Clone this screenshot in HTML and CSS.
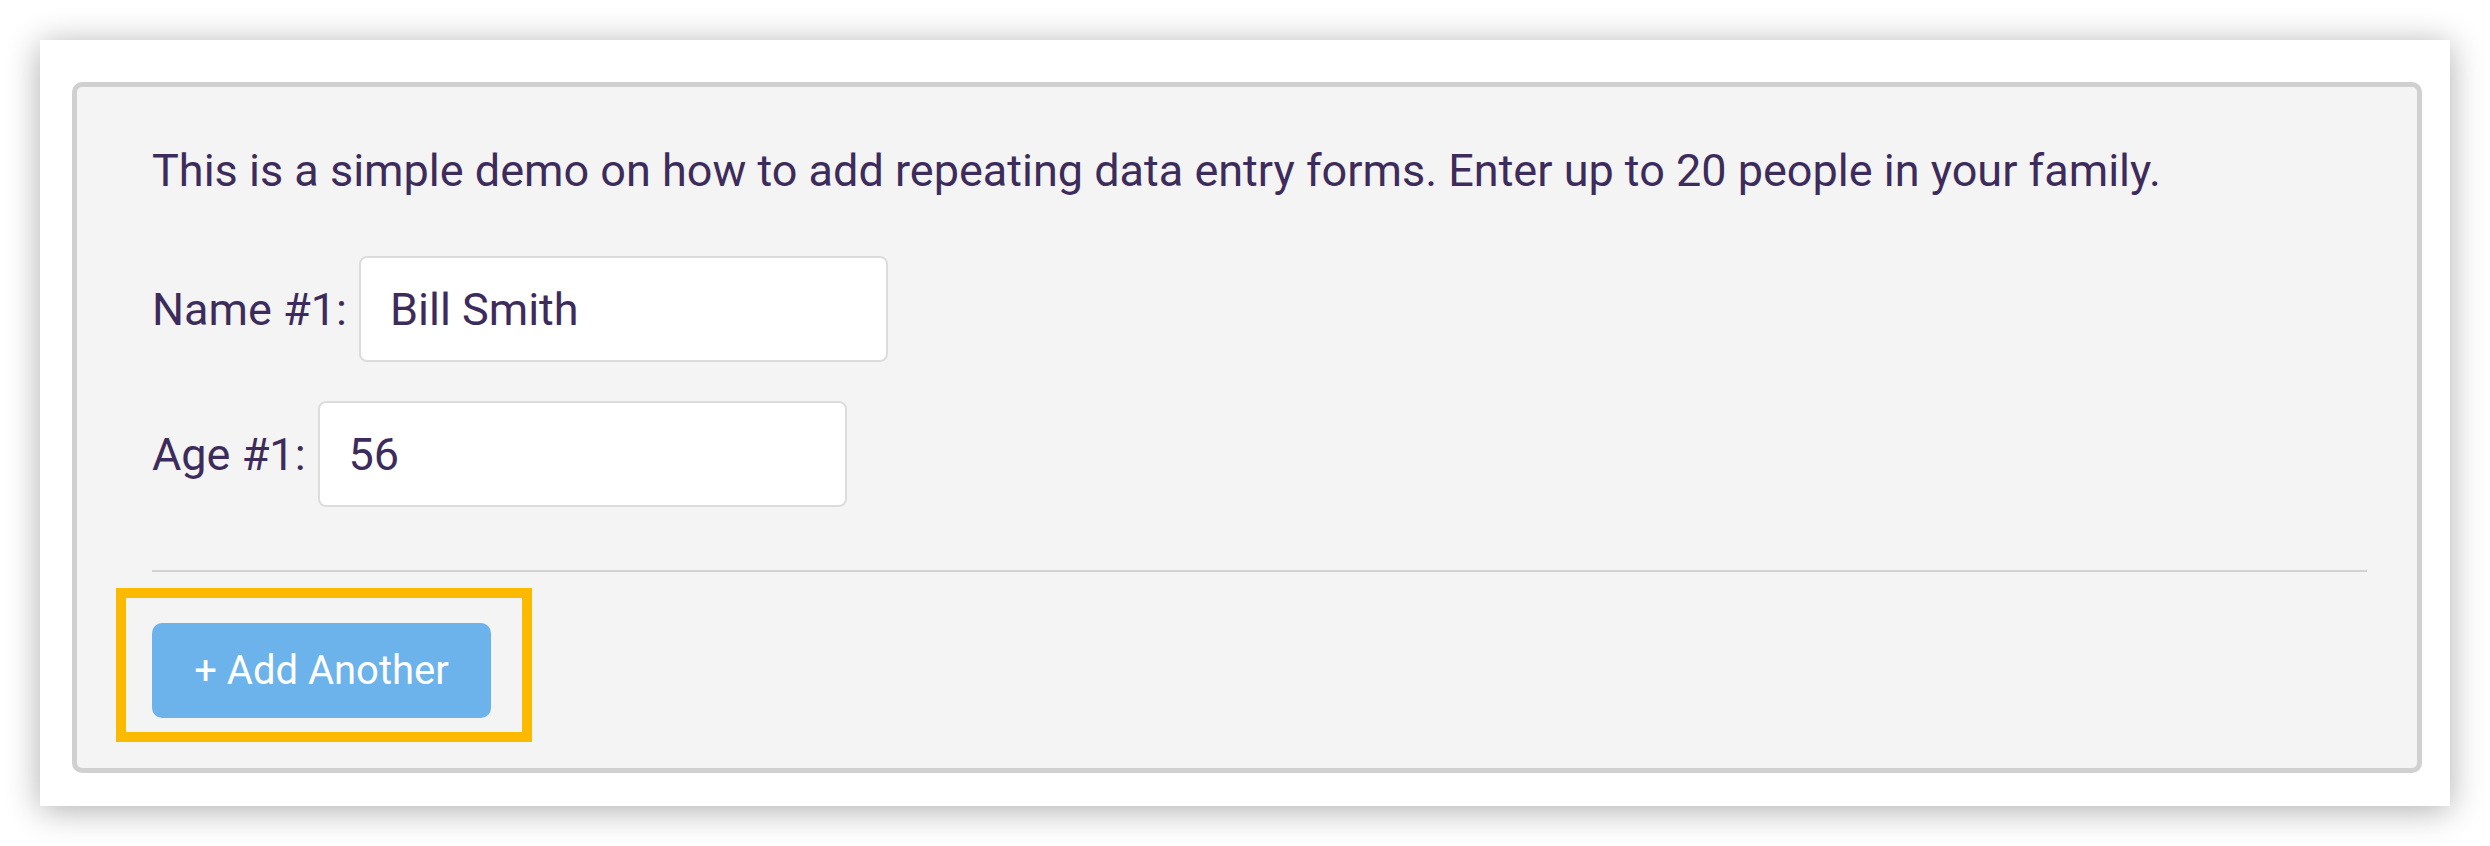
FILE: index.html
```html
<!DOCTYPE html>
<html lang="en">
<head>
<meta charset="utf-8">
<title>Repeating forms demo</title>
<link rel="stylesheet" href="styles.css">
</head>
<body>
<div class="card">
  <div class="panel">
    <p class="intro">This is a simple demo on how to add repeating data entry forms. Enter up to 20 people in your family.</p>
    <div class="field">
      <label class="label" for="name1">Name #1:</label>
      <input class="input" id="name1" type="text" value="Bill Smith">
    </div>
    <div class="field">
      <label class="label" for="age1">Age #1:</label>
      <input class="input" id="age1" type="text" value="56">
    </div>
    <hr class="divider">
    <div class="actions">
      <button class="btn" type="button">+ Add Another</button>
    </div>
  </div>
</div>
</body>
</html>
```
FILE: styles.css
```css
html, body {
  margin: 0;
  padding: 0;
  background: #ffffff;
}

body {
  padding: 40px;
  font-family: Roboto, "Liberation Sans", sans-serif;
  color: #3d2c5b;
}

.card {
  width: 2410px;
  height: 766px;
  box-sizing: border-box;
  background: #ffffff;
  padding: 42px 28px 33px 32px;
  box-shadow: 0 4px 32px rgba(0, 0, 0, 0.32);
}

.panel {
  box-sizing: border-box;
  height: 691px;
  background: #f4f4f4;
  border: 5px solid #d0d0d0;
  border-radius: 10px;
  padding: 57px 50px 0 75px;
}

.intro {
  margin: 0;
  font-size: 45px;
  line-height: 54px;
}

.field {
  display: flex;
  align-items: center;
  gap: 12px;
  margin-top: 58px;
}

.field + .field {
  margin-top: 39px;
}

.label {
  font-size: 45px;
}

.input {
  width: 529px;
  height: 106px;
  box-sizing: border-box;
  border: 2px solid #dcdcdc;
  border-radius: 8px;
  background: #ffffff;
  padding: 0 0 0 29px;
  font-family: Roboto, "Liberation Sans", sans-serif;
  font-size: 45px;
  color: #3d2c5b;
  outline: none;
}

.divider {
  margin: 63px 0 0 0;
  border: 0;
  height: 2px;
  background: #d2d2d2;
}

.actions {
  position: relative;
  margin-top: 51px;
  width: max-content;
}

.actions::after {
  content: "";
  position: absolute;
  left: -36px;
  top: -35px;
  width: 416px;
  height: 154px;
  box-sizing: border-box;
  border: 10px solid #fbb900;
  pointer-events: none;
}

.btn {
  display: block;
  width: 339px;
  height: 95px;
  border: 0;
  border-radius: 10px;
  background: #6cb2eb;
  color: #ffffff;
  font-family: Roboto, "Liberation Sans", sans-serif;
  font-size: 40px;
  padding: 0;
}
```
